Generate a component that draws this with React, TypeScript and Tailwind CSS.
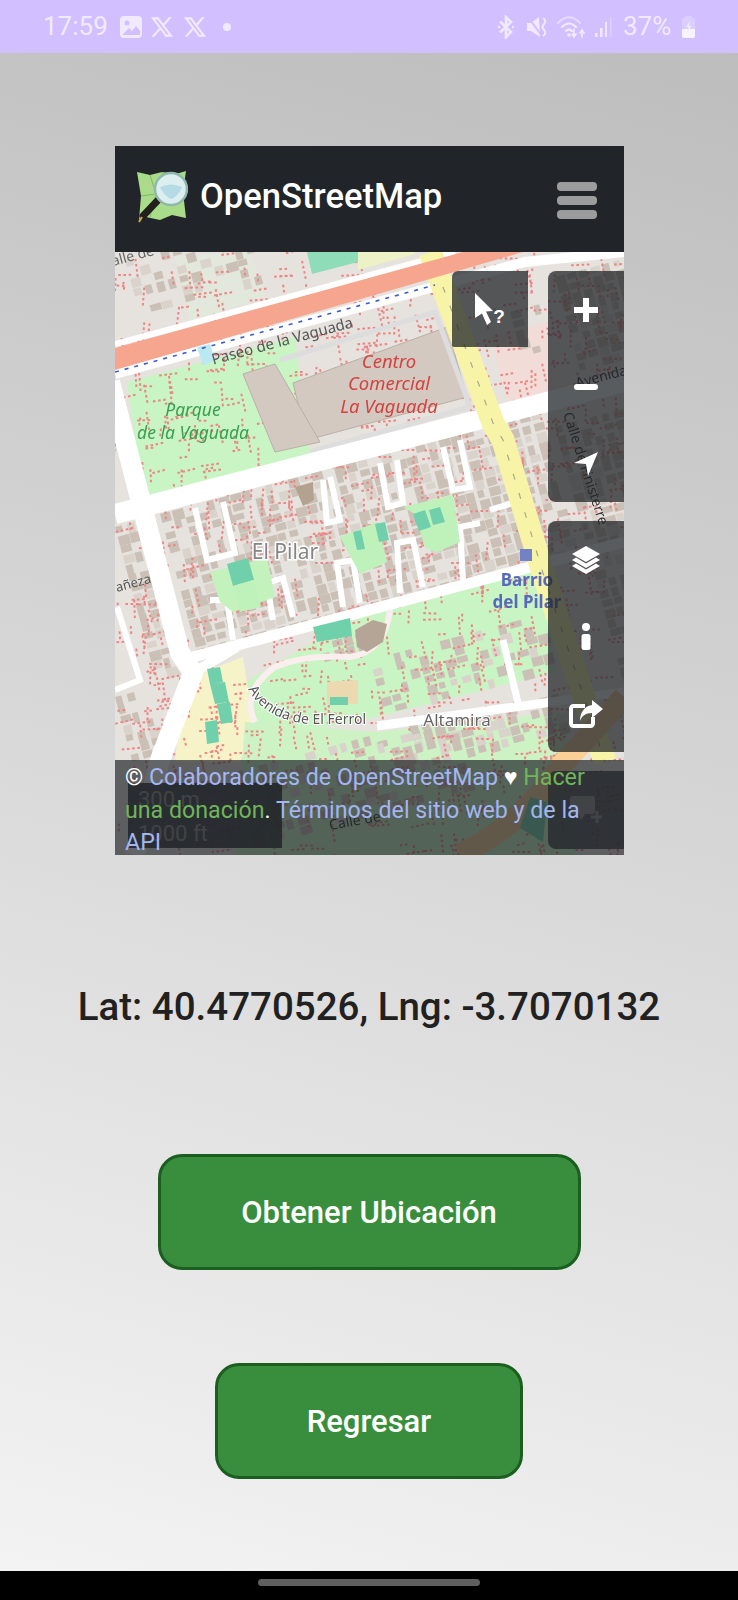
import { RiTwitterXLine } from "react-icons/ri";

// seeded so the map texture is the same on each render
const makeRandom = (seed: number) => () => {
  seed = (seed * 16807) % 2147483647;
  return seed / 2147483647;
};

type Block = [number, number, number, number, number];

const blocks: Block[] = [
  [45, 262, 385, 150, 0.82],
  [0, 275, 36, 160, 0.85],
  [10, 8, 125, 60, 0.5],
  [255, 408, 170, 60, 0.6],
  [262, 490, 190, 40, 0.7],
  [0, 445, 30, 70, 0.85],
  [440, 25, 70, 100, 0.8],
  [440, 175, 70, 270, 0.75],
  [205, 392, 45, 20, 0.9],
  [120, 520, 220, 80, 0.55],
  [395, 60, 35, 60, 0.35],
];

const MapBuildings = () => {
  const rnd = makeRandom(4711);
  return (
    <g>
      {blocks.map(([x, y, w, h, density], i) => {
        const cells = [];
        for (let a = 0; a < w; a += 12) {
          for (let b = 0; b < h; b += 10) {
            if (rnd() > density) continue;
            cells.push(
              <rect
                key={`${a}-${b}`}
                x={a}
                y={b}
                width={6 + rnd() * 6}
                height={6 + rnd() * 5}
                fill={rnd() > 0.75 ? "#dad3cc" : "#cbc0b6"}
              />,
            );
          }
        }
        return (
          <g key={i} transform={`translate(${x} ${y}) rotate(-15)`}>
            {cells}
          </g>
        );
      })}
    </g>
  );
};

const MapDashes = () => {
  const rnd = makeRandom(90210);
  const d: string[] = [];
  for (let i = 0; i < 1100; i++) {
    const x = rnd() * 509;
    const y = rnd() * 603;
    // footways mostly follow the street grid
    const ang = rnd() > 0.5 ? -0.26 + rnd() * 0.3 : 1.3 + rnd() * 0.4;
    const dx = Math.cos(ang) * 2.6;
    const dy = Math.sin(ang) * 2.6;
    const steps = 2 + Math.floor(rnd() * 3);
    for (let k = 0; k < steps; k++) {
      const sx = x + dx * k * 2;
      const sy = y + dy * k * 2;
      d.push(`M${sx.toFixed(1)} ${sy.toFixed(1)}l${dx.toFixed(1)} ${dy.toFixed(1)}`);
    }
  }
  return <path d={d.join("")} stroke="#ee8585" strokeWidth={2} fill="none" />;
};

const stubs = [
  "M80 256L92 308L120 301L108 250",
  "M208 228L212 271L225 268L215 225",
  "M265 211L273 255L288 251L282 208",
  "M328 195L338 238L355 235L345 188",
  "M158 368L152 331L168 326L178 365",
  "M228 355L222 311L238 308L245 351",
  "M285 341L282 291L298 288L308 335",
  "M348 328L345 275L365 271",
  "M95 348L112 348L118 388",
  "M375 258L398 251",
];

const patches: [string, string][] = [
  ["#c3f2bd", "M95 320L152 306L160 345L130 356L118 360L105 350Z"],
  ["#6fd0ab", "M112 312L133 306L139 328L118 334Z"],
  ["#bff2ba", "M118 334L138 328L146 355L125 360Z"],
  ["#bff2ba", "M288 255L338 243L345 290L322 300L310 296L300 262Z"],
  ["#6fd0ab", "M298 262L310 258L316 275L304 279Z"],
  ["#6fd0ab", "M314 258L325 255L330 270L318 273Z"],
  ["#bff2ba", "M225 285L262 270L272 310L245 322Z"],
  ["#6fd0ab", "M238 280L246 278L250 297L242 298Z"],
  ["#6fd0ab", "M260 272L270 270L274 288L264 290Z"],
  ["#b3a28f", "M180 235L198 230L199 248L188 254Z"],
  ["#6fd0ab", "M198 375L235 366L237 384L202 390Z"],
  ["#b5a597", "M240 378L258 368L272 372L268 390L252 400L242 395Z"],
  ["#ecd9b0", "M212 430L243 428L243 452L212 452Z"],
  ["#6fd0ab", "M215 445L233 445L233 453L215 453Z"],
  ["#8fdcb8", "M192 0H243V10L197 22Z"],
  ["#bbe9f2", "M82 95L95 92L100 108L88 114Z"],
  ["#ecf1c6", "M243 0H300V2L243 18Z"],
];

const MapDrawing = () => (
  <svg viewBox="0 0 509 603" className="block w-full h-full blur-[0.6px] font-['Noto_Sans']">
    <rect width="509" height="603" fill="#e6e3df" />
    {/* parks and land use */}
    <path d="M12 130L180 85L195 205L30 255Z" fill="#c9f4c4" />
    <path d="M282 345L428 310L440 420L262 465L135 490L130 430L190 395Z" fill="#c9f4c4" />
    <path d="M60 5L135 0L150 45L75 70Z" fill="#e3e8dc" />
    <path d="M375 85L432 70L440 150L395 160Z" fill="#f1dcd8" />
    <path d="M68 428L128 405L138 470L125 510L60 510Z" fill="#f7f3c8" />
    <path d="M130 470L262 480L450 460L460 603H120Z" fill="#cdf3c4" />
    <MapBuildings />
    <MapDashes />
    {/* shopping centre */}
    <path d="M178 131L332 75L352 145L192 188Z" fill="#d4c9c1" stroke="#b9b0a8" />
    <path d="M128 122L160 112L205 190L160 200Z" fill="#d4c9c1" stroke="#b9b0a8" />
    <path d="M165 108L320 60L355 155L195 200" fill="none" stroke="#ddd" strokeWidth={5} />
    {/* roads */}
    <path d="M0 92L340 0" stroke="#fff" strokeWidth={6} />
    <path d="M0 122L410 10L509 0" stroke="#fff" strokeWidth={10} fill="none" />
    <path d="M0 262L509 130" stroke="#fff" strokeWidth={20} />
    <path d="M78 405L509 290" stroke="#fff" strokeWidth={11} />
    <path d="M-5 130L65 401L78 421L45 508L20 603" stroke="#fff" strokeWidth={20} fill="none" strokeLinejoin="round" />
    <path d="M2 355L25 428L0 438" stroke="#fff" strokeWidth={6} fill="none" />
    <path d="M78 421L122 395" stroke="#fff" strokeWidth={10} />
    <path d="M140 470Q125 440 160 415Q190 402 235 405Q270 400 275 358" stroke="#fbeeee" strokeWidth={6} fill="none" />
    <path d="M262 474L509 440" stroke="#fff" strokeWidth={9} />
    <path d="M388 388L403 451" stroke="#fff" strokeWidth={7} />
    {stubs.map((d) => (
      <path key={d} d={d} stroke="#fff" strokeWidth={6} fill="none" />
    ))}
    {patches.map(([fill, d]) => (
      <path key={d} d={d} fill={fill} />
    ))}
    {/* avenue runs under the salmon road */}
    <path d="M315 0L328 35L378 171L388 188L428 321L461 421L490 510" stroke="#f7f4a8" strokeWidth={23} fill="none" />
    <path d="M328 35L378 171L388 188L428 321L461 421L490 510" stroke="#a8a888" strokeWidth={1.2} strokeDasharray="6 14" fill="none" />
    <path d="M345 603Q410 570 445 515L509 445" stroke="#fbcf96" strokeWidth={22} fill="none" />
    <path d="M0 96L348 0H408L0 118Z" fill="#f6a68e" />
    <path d="M0 120L320 33" stroke="#3a5ed0" strokeWidth={1.6} strokeDasharray="4 6" />
    {/* teal buildings */}
    <path d="M92 417L105 415L108 430L95 432ZM95 432L110 430L114 450L100 452ZM102 452L115 450L118 470L106 472ZM90 470L102 468L104 490L92 492Z" fill="#6fd0ab" />
    <path d="M405 576L415 545L432 550L428 590Z" fill="#6fd0ab" />
    <rect x="405" y="297" width="12" height="12" fill="#7382c5" />
    {/* labels */}
    <text x="167" y="94" transform="rotate(-15 167 88)" textAnchor="middle" fontSize="15" fill="#555">Paseo de la Vaguada</text>
    <g textAnchor="middle" fontSize="18.5" fontStyle="italic" fill="#d2433f">
      <text x="274" y="116">Centro</text>
      <text x="274" y="138">Comercial</text>
      <text x="274" y="161">La Vaguada</text>
    </g>
    <g textAnchor="middle" fontSize="17.5" fontStyle="italic" fill="#3a9f52">
      <text x="78" y="164">Parque</text>
      <text x="78" y="187">de la Vaguada</text>
    </g>
    <text x="170" y="307" textAnchor="middle" fontSize="21" fill="#858585" stroke="#fff" strokeWidth={3} paintOrder="stroke">El Pilar</text>
    <g textAnchor="middle" fontSize="17" fontWeight="700" fill="#5869bd">
      <text x="412" y="334">Barrio</text>
      <text x="412" y="356">del Pilar</text>
    </g>
    <text x="342" y="474" textAnchor="middle" fontSize="17" fill="#666" stroke="#fff" strokeWidth={2} paintOrder="stroke">Altamira</text>
    <path id="ferrol" d="M133 437Q150 468 195 472L262 472" fill="none" />
    <text fontSize="14" fill="#555" stroke="#fff" strokeWidth={2} paintOrder="stroke">
      <textPath href="#ferrol">Avenida de El Ferrol</textPath>
    </text>
    <text x="2" y="340" transform="rotate(-15 2 340)" fontSize="13" fill="#555">añeza</text>
    <text x="-2" y="14" transform="rotate(-15 -2 14)" fontSize="14" fill="#666">alle de</text>
    <text x="462" y="136" transform="rotate(-15 462 136)" fontSize="14" fill="#333">Avenida</text>
    <text x="448" y="162" transform="rotate(72 448 162)" fontSize="14" fill="#333">Calle de Finisterre</text>
    <text x="215" y="578" transform="rotate(-10 215 578)" fontSize="14" fill="#333">Calle de</text>
  </svg>
);

const OsmLogo = () => (
  <svg viewBox="0 0 52 54" className="w-[52px] h-[54px] shrink-0">
    <path d="M1 2L14 5L26 2L40 4L50 1L47 22L50 48L36 45L24 50L10 47L3 50L5 26Z" fill="#a9dc8a" />
    <path d="M14 5L20 24L14 47M26 2L30 20M5 26L20 24" stroke="#7fb868" strokeWidth={1} fill="none" />
    <path d="M8 12L18 18L20 30L30 36" stroke="#d7c59a" strokeWidth={1} fill="none" />
    <path d="M24 28L7 46" stroke="#23201c" strokeWidth={7} strokeLinecap="round" />
    <path d="M6 47L3 52" stroke="#c9a24a" strokeWidth={2} />
    <circle cx="35" cy="19" r="16" fill="#dcefee" stroke="#8fb9ad" strokeWidth={2.500} />
    <path d="M24 17Q35 12 46 17Q42 27 35 29Q28 26 24 17Z" fill="#b5dbe6" />
  </svg>
);

const PlusIcon = () => (
  <svg viewBox="0 0 24 24" className="w-6 h-6" fill="none" stroke="#fff" strokeWidth={6}>
    <path d="M12 0V24M0 12H24" />
  </svg>
);

const MinusIcon = () => (
  <svg viewBox="0 0 24 24" className="w-6 h-6" fill="none" stroke="#fff" strokeWidth={6} strokeLinecap="round">
    <path d="M3 12H21" />
  </svg>
);

const LocateIcon = () => (
  <svg viewBox="0 0 24 24" className="w-6 h-6" fill="#fff">
    <path d="M24 0L14 24L12 12L0 11Z" />
  </svg>
);

const LayersIcon = () => (
  <svg viewBox="0 0 28 28" className="w-7 h-7" fill="#fff">
    <path d="M14 0L28 8L14 16L0 8Z" />
    <path d="M4 11.500L14 17.500L24 11.500L28 14L14 22L0 14Z" />
    <path d="M4 17.500L14 23.500L24 17.500L28 20L14 28L0 20Z" />
  </svg>
);

const InfoIcon = () => (
  <svg viewBox="0 0 10 27" className="w-[10px] h-[27px]" fill="#fff">
    <circle cx="5" cy="4" r="4" />
    <rect x="0.5" y="11" width="9" height="16" rx="2.500" />
  </svg>
);

const ShareIcon = () => (
  <svg viewBox="0 0 34 28" className="w-[34px] h-7" fill="none">
    <path d="M16 6H4.500A2.500 2.500 0 0 0 2 8.500V23.500A2.500 2.500 0 0 0 4.500 26H21.500A2.500 2.500 0 0 0 24 23.500V17" stroke="#fff" strokeWidth={4} />
    <path d="M23 0L34 9L23 18V13C16 13 13 16 11 21C11 13 15 6 23 5Z" fill="#fff" />
  </svg>
);

const QueryIcon = () => (
  <div className="flex items-end">
    <svg viewBox="0 0 18 32" className="w-[18px] h-8" fill="#fff">
      <path d="M0 0L18 18L11 18.500L16 29L12 32L7 20.500L0 25Z" />
    </svg>
    <span className="text-white text-[19px] leading-[18px] font-bold font-['Liberation_Sans'] -mb-px">?</span>
  </div>
);

const NoteIcon = () => (
  <svg viewBox="0 0 32 28" className="w-8 h-7" fill="#8c8c8c">
    <path d="M3 0H22A3 3 0 0 1 25 3V15A3 3 0 0 1 22 18H15L11 24L9 18H3A3 3 0 0 1 0 15V3A3 3 0 0 1 3 0Z" />
    <path d="M27 15V27M21 21H32" stroke="#8c8c8c" strokeWidth={3} />
  </svg>
);

const ControlSlot = ({ children }: { children: React.ReactNode }) => (
  <div className="h-[77px] flex items-center justify-center">{children}</div>
);

const MapControls = () => (
  <div className="absolute top-[19px] right-0 flex gap-5 items-start">
    <div className="w-[76px] h-[76px] rounded-tl-md rounded-bl-[2px] bg-[#212529]/75 flex items-center justify-center">
      <QueryIcon />
    </div>
    <div className="w-[76px] flex flex-col gap-[19px]">
      <div className="rounded-l-lg bg-[#212529]/75">
        <ControlSlot><PlusIcon /></ControlSlot>
        <ControlSlot><MinusIcon /></ControlSlot>
        <ControlSlot><LocateIcon /></ControlSlot>
      </div>
      <div className="rounded-l-lg bg-[#212529]/75">
        <ControlSlot><LayersIcon /></ControlSlot>
        <ControlSlot><InfoIcon /></ControlSlot>
        <ControlSlot><ShareIcon /></ControlSlot>
      </div>
      <div className="rounded-l-lg bg-[#212529]/75 h-[78px] flex items-center justify-center">
        <NoteIcon />
      </div>
    </div>
  </div>
);

const ScaleBox = () => (
  <div className="absolute left-[13px] bottom-[7px] w-[154px] h-[65px] bg-[#212529]/85 pl-[10px] text-[22px] leading-[34px] text-[#8a8a8a]">
    <div>300 m</div>
    <div>1000 ft</div>
  </div>
);

const Attribution = () => (
  <div className="absolute left-0 right-0 bottom-0 h-[95px] bg-[#212529]/70 pl-[10px] pr-[30px] pt-[1px] text-[23.2px] leading-[32.5px] text-white">
    © <span className="text-[#a3b6f2]">Colaboradores de OpenStreetMap</span> ♥{" "}
    <span className="text-[#6fb55a]">Hacer una donación</span>.{" "}
    <span className="text-[#a3b6f2]">Términos del sitio web y de la API</span>
  </div>
);

const ImageIcon = () => (
  <svg viewBox="0 0 22 22" className="w-[22px] h-[22px]">
    <rect width="22" height="22" rx="4" fill="#f1eaff" />
    <circle cx="7" cy="7" r="2.500" fill="#d1bfff" />
    <path d="M3 18L9 12L12 15L16 10L20 15V19H3Z" fill="#d1bfff" />
  </svg>
);

const BluetoothIcon = () => (
  <svg viewBox="0 0 18 24" className="w-[18px] h-6" fill="none" stroke="#f1eaff" strokeWidth={2.600}>
    <path d="M3 6.500L14 17L9 22V2L14 7L3 17.500" />
    <circle cx="2" cy="12" r="1.200" fill="#f1eaff" stroke="none" />
    <circle cx="16" cy="12" r="1.200" fill="#f1eaff" stroke="none" />
  </svg>
);

const MuteIcon = () => (
  <svg viewBox="0 0 21 24" className="w-[21px] h-6" fill="#f1eaff">
    <path d="M0 8H4L12 2L13 22L4 16H0Z" />
    <path d="M1 2L15 21" stroke="#d1bfff" strokeWidth={2} />
    <path d="M16 3Q20 6 17 9Q14 12 17 15Q20 18 16 21" stroke="#f1eaff" strokeWidth={2} fill="none" />
  </svg>
);

const WifiIcon = () => (
  <svg viewBox="0 0 30 24" className="w-[30px] h-6" fill="none" strokeLinecap="round">
    <path d="M1 8Q12 -3 23 8" stroke="#e4d9ff" strokeWidth={2.200} />
    <path d="M5 12Q12 5 19 12" stroke="#f1eaff" strokeWidth={2.200} />
    <path d="M9 16Q12 13 15 16" stroke="#f1eaff" strokeWidth={2.200} />
    <circle cx="12" cy="20" r="1.800" fill="#f1eaff" />
    <path d="M17 14V21M15 19L17 22L19 19" stroke="#f1eaff" strokeWidth={1.600} />
    <path d="M25 22V15M23 18L25 15L27 18" stroke="#f1eaff" strokeWidth={1.600} />
  </svg>
);

const SignalIcon = () => (
  <svg viewBox="0 0 18 24" className="w-[18px] h-6" fill="#f1eaff">
    <rect x="0" y="18" width="2.500" height="4" />
    <rect x="5" y="13" width="2.500" height="9" />
    <rect x="10" y="7" width="2" height="15" opacity=".9" />
    <rect x="15" y="2" width="1.500" height="20" opacity=".4" />
  </svg>
);

const BatteryIcon = () => (
  <svg viewBox="0 0 15 24" className="w-[15px] h-6">
    <path d="M4 1H11V3H14V14H1V3H4Z" fill="#dccdff" />
    <path d="M1 14H14V21A2 2 0 0 1 12 23H3A2 2 0 0 1 1 21Z" fill="#f8f4ff" />
    <path d="M9 6L5 12H7.500L6 18L10.500 11H8Z" fill="#f1eaff" />
  </svg>
);

const StatusBar = () => (
  <div className="h-[53px] shrink-0 bg-[#d1bfff] flex items-center justify-between pl-[43px] pr-[42px] text-[#f1eaff] text-[26px]">
    <div className="flex items-center">
      <span className="w-[77px]">17:59</span>
      <ImageIcon />
      <RiTwitterXLine className="w-[26px] h-[26px] ml-[7px]" />
      <RiTwitterXLine className="w-[26px] h-[26px] ml-[7px]" />
      <span className="w-2 h-2 rounded-full bg-[#f1eaff] ml-[15px]" />
    </div>
    <div className="flex items-center">
      <BluetoothIcon />
      <div className="ml-3"><MuteIcon /></div>
      <div className="ml-[9px]"><WifiIcon /></div>
      <div className="ml-2"><SignalIcon /></div>
      <span className="ml-[10px] w-[58px]">37%</span>
      <BatteryIcon />
    </div>
  </div>
);

const GreenButton = ({ label, className }: { label: string; className: string }) => (
  <button className={`h-[116px] pt-[3px] rounded-[24px] border-[3px] border-[#1b5e20] bg-[#388e3c] text-white text-[31px] font-medium ${className}`}>
    {label}
  </button>
);

export default function App() {
  return (
    <div className="w-[738px] h-[1600px] flex flex-col font-['Roboto',sans-serif] overflow-hidden">
      <StatusBar />
      <main className="flex-1 flex flex-col items-center pt-[93px] bg-linear-[195deg] from-[#bdbdbd] to-[#f3f3f3]">
        <section className="w-[509px] ml-[1px]">
          <header className="h-[106px] bg-[#212529] flex items-center justify-between pl-[21px] pr-[27px]">
            <div className="flex items-center gap-3 -mt-1">
              <OsmLogo />
              <span className="text-white text-[34.6px] font-medium">OpenStreetMap</span>
            </div>
            <div className="w-10 flex flex-col gap-[5px] mt-[2px]">
              <span className="h-[9px] rounded-[4px] bg-[#9c9c9c]" />
              <span className="h-[9px] rounded-[4px] bg-[#9c9c9c]" />
              <span className="h-[9px] rounded-[4px] bg-[#9c9c9c]" />
            </div>
          </header>
          <div className="relative h-[603px] overflow-hidden">
            <MapDrawing />
            <MapControls />
            <ScaleBox />
            <Attribution />
          </div>
        </section>
        <p className="mt-[132px] h-10 text-[38.5px] leading-10 font-medium text-[#212121]">
          Lat: 40.4770526, Lng: -3.7070132
        </p>
        <GreenButton label="Obtener Ubicación" className="mt-[127px] w-[423px]" />
        <GreenButton label="Regresar" className="mt-[93px] w-[308px]" />
      </main>
      <footer className="h-[29px] shrink-0 bg-black flex items-center justify-center">
        <span className="w-[222px] h-[7px] rounded-full bg-[#5f5f5f] -mt-[7px]" />
      </footer>
    </div>
  );
}
